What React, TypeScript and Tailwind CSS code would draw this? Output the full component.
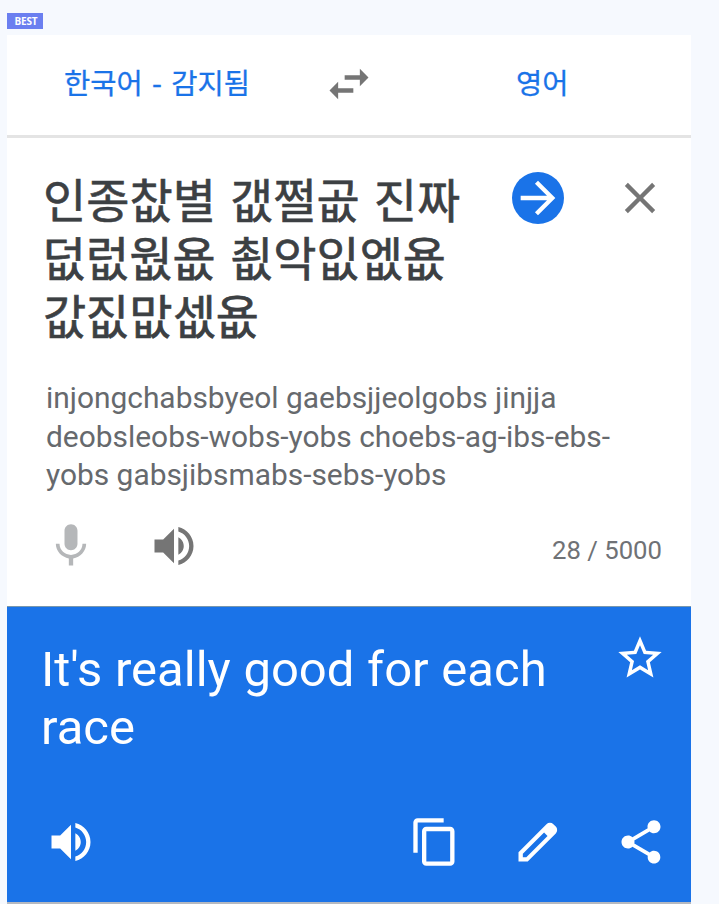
import React from "react";

const korean = "font-['Noto_Sans_CJK_KR',sans-serif]";

type IconProps = {
  className?: string;
  children: React.ReactNode;
};

const Icon: React.FC<IconProps> = ({ className = "", children }) => (
  <svg viewBox="0 0 24 24" fill="currentColor" className={`size-[52px] shrink-0 ${className}`}>
    {children}
  </svg>
);

const speakerPath =
  "M3 9v6h4l5 5V4L7 9H3zm13.5 3c0-1.77-1.02-3.29-2.5-4.03v8.05c1.48-.73 2.5-2.25 2.5-4.02zM14 3.23v2.06c2.89.86 5 3.54 5 6.71s-2.11 5.85-5 6.71v2.06c4.01-.91 7-4.49 7-8.77s-2.99-7.86-7-8.77z";

const LanguageBar: React.FC = () => (
  <header className="flex h-[103px] border-b-[3px] border-[#e4e4e4] text-[#1a73e8]">
    <div
      className={`w-[299px] pl-[57px] pt-[26px] text-[28.5px] leading-[42px] whitespace-pre [word-spacing:3px] [-webkit-text-stroke:0.3px] ${korean}`}
    >
      한국어 - 감지됨
    </div>
    {/* swap languages */}
    <Icon className="ml-[17px] mt-[23px] text-[#757575]">
      <path d="M6.99 11L3 15l3.99 4v-3H14v-2H6.99v-3zM21 9l-3.99-4v3H10v2h7.01v3L21 9z" />
    </Icon>
    <div
      className={`ml-[141px] pt-[26px] text-[28.5px] leading-[42px] [-webkit-text-stroke:0.3px] ${korean}`}
    >
      영어
    </div>
  </header>
);

const SourcePanel: React.FC = () => (
  <section className="flex h-[469px] flex-col border-b border-[#7897ad]">
    <div className="flex h-[202px] pl-9 pt-[31px]">
      <p
        className={`w-[469px] text-[47px] leading-[58px] whitespace-nowrap text-[#3c4043] [word-spacing:3.5px] [-webkit-text-stroke:0.6px] ${korean}`}
      >
        인종찺별 갮쩔곲 진짜
        <br />
        덦럾웞욦 쵮악잆엢욦
        <br />
        값짒맚셊욦
      </p>
      <div className="mt-[3px] flex size-[52px] items-center justify-center rounded-full bg-[#1a73e8] text-white">
        <Icon>
          <path d="M12 4l-1.41 1.41L16.17 11H4v2h12.17l-5.58 5.59L12 20l8-8z" />
        </Icon>
      </div>
      <Icon className="ml-[50px] mt-[3px] text-[#757575]">
        <path d="M19 6.41L17.59 5 12 10.59 6.41 5 5 6.41 10.59 12 5 17.59 6.41 19 12 13.41 17.59 19 19 17.59 13.41 12z" />
      </Icon>
    </div>
    <p className="mt-[39px] pl-[39px] font-[Roboto,sans-serif] text-[29.9px] leading-[38.5px] whitespace-nowrap text-[#66696d]">
      injongchabsbyeol gaebsjjeolgobs jinjja
      <br />
      deobsleobs-wobs-yobs choebs-ag-ibs-ebs-
      <br />
      yobs gabsjibsmabs-sebs-yobs
    </p>
    <div className="mt-[25.5px] flex items-center pl-[38px] pr-[29px]">
      <Icon className="text-[#b5b7b9]">
        <path d="M12 14c1.66 0 2.99-1.34 2.99-3L15 5c0-1.66-1.34-3-3-3S9 3.34 9 5v6c0 1.66 1.34 3 3 3zm5.3-3c0 3-2.54 5.1-5.3 5.1S6.7 14 6.7 11H5c0 3.41 2.72 6.23 6 6.72V21h2v-3.28c3.28-.48 6-3.3 6-6.72h-1.7z" />
      </Icon>
      <Icon className="ml-[51px] text-[#757575]">
        <path d={speakerPath} />
      </Icon>
      <span className="ml-auto mt-2 font-[Roboto,sans-serif] text-[25.7px] leading-[30px] text-[#6f7276]">
        28 / 5000
      </span>
    </div>
  </section>
);

const ResultPanel: React.FC = () => (
  <section className="flex h-[295px] flex-col bg-[#1a73e8] text-white">
    <div className="flex justify-between pl-[34px] pr-[25px] pt-[25px]">
      <p className="pt-[9px] font-[Roboto,sans-serif] text-[49px] leading-[58px] whitespace-nowrap [word-spacing:0.5px]">
        It's really good for each
        <br />
        race
      </p>
      <Icon>
        <path d="M22 9.24l-7.19-.62L12 2 9.19 8.63 2 9.24l5.46 4.73L5.82 21 12 17.27 18.18 21l-1.63-7.03L22 9.24zM12 15.4l-3.76 2.27 1-4.28-3.32-2.88 4.38-.38L12 6.1l1.71 4.04 4.38.38-3.32 2.88 1 4.28L12 15.4z" />
      </Icon>
    </div>
    <div className="mb-[34px] mt-auto flex items-center pl-[38px] pr-[24px]">
      <Icon>
        <path d={speakerPath} />
      </Icon>
      <Icon className="ml-auto">
        <path d="M16 1H4c-1.1 0-2 .9-2 2v14h2V3h12V1zm3 4H8c-1.1 0-2 .9-2 2v14c0 1.1.9 2 2 2h11c1.1 0 2-.9 2-2V7c0-1.1-.9-2-2-2zm0 16H8V7h11v14z" />
      </Icon>
      {/* edit */}
      <Icon className="ml-[51px]">
        <path
          fillRule="evenodd"
          d="M3 21v-4.25L15.9 3.8a2.3 2.3 0 0 1 3.2 0l1.1 1.1a2.3 2.3 0 0 1 0 3.2L7.25 21zM5 19h1.6l9.8-9.8-1.6-1.6L5 17.4z"
        />
      </Icon>
      <Icon className="ml-[51px]">
        <path d="M18 16.08c-.76 0-1.44.3-1.96.77L8.91 12.7c.05-.23.09-.46.09-.7s-.04-.47-.09-.7l7.05-4.11c.54.5 1.25.81 2.04.81 1.66 0 3-1.34 3-3s-1.34-3-3-3-3 1.34-3 3c0 .24.04.47.09.7L8.04 9.81C7.5 9.31 6.79 9 6 9c-1.66 0-3 1.34-3 3s1.34 3 3 3c.79 0 1.5-.31 2.04-.81l7.12 4.16c-.05.21-.08.43-.08.65 0 1.61 1.31 2.92 2.92 2.92s2.92-1.31 2.92-2.92-1.31-2.92-2.92-2.92z" />
      </Icon>
    </div>
  </section>
);

const App: React.FC = () => {
  return (
    <main className="h-[904px] w-[719px] overflow-hidden bg-[#f6f9fe] pl-[7px] pt-[13px]">
      <span className="block h-4 w-9 bg-[#6b7ff0] pl-[2px] text-center font-['Open_Sans',sans-serif] text-[10px] font-bold leading-[17px] tracking-[-0.2px] text-white">
        BEST
      </span>
      <div className="mt-[6px] h-[869px] w-[684px] bg-[#b5b9c0]">
        <div className="bg-white">
          <LanguageBar />
          <SourcePanel />
          <ResultPanel />
        </div>
      </div>
    </main>
  );
};

export default App;
